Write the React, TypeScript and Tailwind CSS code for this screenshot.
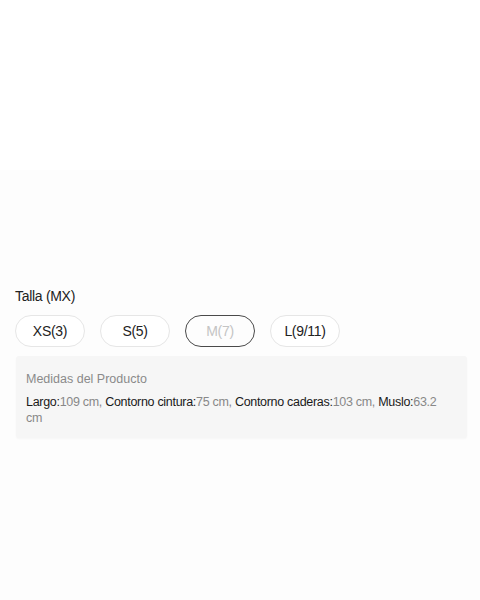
import React from "react";

const sizes = [
  { label: "XS(3)", disabled: false },
  { label: "S(5)", disabled: false },
  { label: "M(7)", disabled: true },
  { label: "L(9/11)", disabled: false },
];

export default function App() {
  return (
    <div
      className="w-[480px] h-[600px] bg-[#fdfdfd] flex flex-col"
      style={{ fontFamily: '"Liberation Sans", Arial, sans-serif' }}
    >
      <div className="h-[170px] bg-white" />
      <div className="pt-[116px] px-[15px]">
        <div className="text-[14px] leading-[20px] text-[#222] tracking-[-0.3px]">Talla (MX)</div>
        <div className="flex gap-[15px] mt-[9px]">
          {sizes.map((s) => (
            <div
              key={s.label}
              className={
                s.disabled
                  ? "w-[70px] h-[32px] rounded-full border-[1.5px] border-[#4a4a4a] flex items-center justify-center text-[14px] text-[#c4c4c4] tracking-[-0.3px]"
                  : "w-[70px] h-[32px] rounded-full border border-[#e6e6e6] bg-white flex items-center justify-center text-[14px] text-[#222] tracking-[-0.3px]"
              }
            >
              {s.label}
            </div>
          ))}
        </div>
        <div className="mt-[9px] ml-px w-[451px] bg-[#f6f6f6] rounded-[3px] pl-[10px] pr-[20px] pt-[14px] pb-[12px] shadow-[0_1px_2px_rgba(0,0,0,0.03)]">
          <div className="text-[12.5px] leading-[18px] text-[#8a8a8a]">Medidas del Producto</div>
          <div className="mt-[6px] text-[12.5px] leading-[16px] text-[#888] tracking-[-0.3px]">
            <span className="text-[#1a1a1a]">Largo:</span>109 cm, <span className="text-[#1a1a1a]">Contorno cintura:</span>75 cm,{" "}
            <span className="text-[#1a1a1a]">Contorno caderas:</span>103 cm, <span className="text-[#1a1a1a]">Muslo:</span>63.2 cm
          </div>
        </div>
      </div>
    </div>
  );
}
